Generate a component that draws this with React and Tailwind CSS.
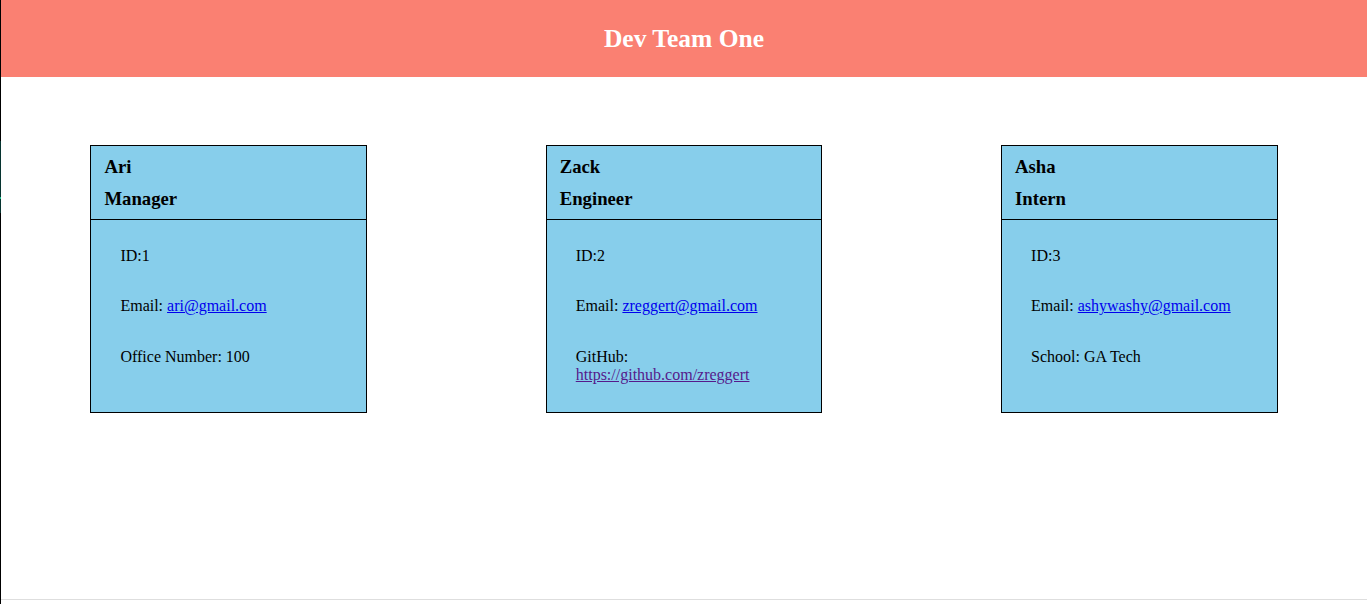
export default function App() {
  const cards = [
    {
      name: "Ari",
      role: "Manager",
      id: 1,
      email: "ari@gmail.com",
      extra: <span>Office Number: 100</span>,
    },
    {
      name: "Zack",
      role: "Engineer",
      id: 2,
      email: "zreggert@gmail.com",
      extra: (
        <span>
          GitHub:
          <a href="#" className="block text-[#551A8B] underline">
            https://github.com/zreggert
          </a>
        </span>
      ),
    },
    {
      name: "Asha",
      role: "Intern",
      id: 3,
      email: "ashywashy@gmail.com",
      extra: <span>School: GA Tech</span>,
    },
  ];
  return (
    <div
      className="flex h-[604px] w-[1367px] bg-white text-black"
      style={{ fontFamily: '"Liberation Serif", "Times New Roman", serif' }}
    >
      <div className="flex w-px flex-col">
        <div className="h-[141px] bg-black" />
        <div className="h-[56px] bg-[#06332f]" />
        <div className="h-[2px] bg-[#19c08a]" />
        <div className="h-[14px] bg-[#06332f]" />
        <div className="flex-1 bg-black" />
      </div>
      <div className="flex flex-1 flex-col">
        <header className="flex h-[77px] items-center justify-center bg-[#FA8072] pb-[1px]">
          <h1 className="text-[25.5px] font-bold leading-[29px] text-white">Dev Team One</h1>
        </header>
        <main className="mt-[68px] flex items-stretch justify-around">
          {cards.map((c) => (
            <div key={c.id} className="w-[276.5px] border border-black bg-[#87CEEB]">
              <div className="border-b border-black pl-[13px] pt-[5px] pb-[4px]">
                <h3 className="text-[18.72px] font-bold leading-[32px]">{c.name}</h3>
                <h3 className="text-[18.72px] font-bold leading-[32px]">{c.role}</h3>
              </div>
              <ul className="flex flex-col gap-[32px] pl-[29px] pt-[27px] pb-[27.5px] text-[16px] leading-[18.4px]">
                <li>ID:{c.id}</li>
                <li>
                  Email:{" "}
                  <a href="#" className="text-[#0000EE] underline">
                    {c.email}
                  </a>
                </li>
                <li>{c.extra}</li>
              </ul>
            </div>
          ))}
        </main>
        <div className="flex-1" />
        <div className="h-px bg-[#dedede]" />
        <div className="h-[4px]" />
      </div>
    </div>
  );
}
